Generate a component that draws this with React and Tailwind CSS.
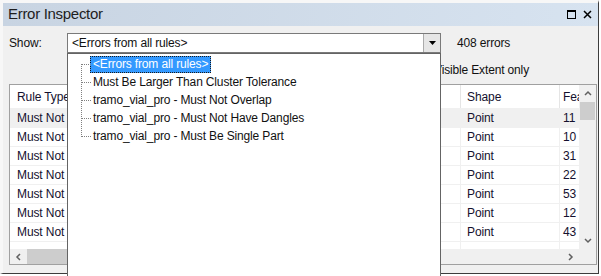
import React from 'react';

const rows = ['11', '10', '31', '22', '53', '12', '43'];

const ruleItems = [
    'Must Be Larger Than Cluster Tolerance',
    'tramo_vial_pro - Must Not Overlap',
    'tramo_vial_pro - Must Not Have Dangles',
    'tramo_vial_pro - Must Be Single Part',
];

const Chevron = ({ dir }) => {
    const paths = {
        up: 'M1 5 L4 2 L7 5',
        down: 'M1 2 L4 5 L7 2',
        left: 'M5 1 L2 4 L5 7',
        right: 'M2 1 L5 4 L2 7',
    };
    return (
        <svg width="8" height="8" viewBox="0 0 8 8">
            <path d={paths[dir]} fill="none" stroke="#606060" strokeWidth="1.5" />
        </svg>
    );
};

const RuleList = () => (
    <div className="absolute left-[67px] top-[53px] w-[374px] h-[230px] bg-white border border-[#646464] z-10">
        {/* tree connector lines */}
        <svg className="absolute left-0 top-0" width="30" height="100">
            <g stroke="#808080" strokeWidth="1" strokeDasharray="1 1" shapeRendering="crispEdges">
                <line x1="13.5" y1="10" x2="13.5" y2="83" />
                <line x1="13.5" y1="10.5" x2="23" y2="10.5" />
                <line x1="13.5" y1="28.5" x2="23" y2="28.5" />
                <line x1="13.5" y1="46.5" x2="23" y2="46.5" />
                <line x1="13.5" y1="64.5" x2="23" y2="64.5" />
                <line x1="13.5" y1="82.5" x2="23" y2="82.5" />
            </g>
        </svg>
        <div className="flex flex-col pt-[1px] pl-[22px] text-[12px] tracking-[-0.15px] text-[#111]">
            <div className="h-[18px] flex items-center">
                <span className="h-[17px] flex items-center px-[3px] bg-[#3399ff] text-white outline outline-1 outline-dotted outline-[#1a1a1a] -outline-offset-1">
                    &lt;Errors from all rules&gt;
                </span>
            </div>
            {ruleItems.map((t) => (
                <div key={t} className="h-[18px] flex items-center pl-[3px]">{t}</div>
            ))}
        </div>
    </div>
);

const ErrorTable = () => (
    <div className="ml-[6px] mt-[6px] w-[588px] h-[181px] border border-[#a0a0a0] bg-white flex flex-col">
        <div className="flex h-[164px]">
            <div className="flex-1 overflow-hidden flex flex-col text-[12px] tracking-[-0.1px] text-[#14102e]">
                <div className="h-[24px] flex shrink-0 border-b border-[#f0f0f0]">
                    <div className="w-[451px] shrink-0 flex items-center pl-[7px] border-r border-[#e5e5e5]">Rule Type</div>
                    <div className="w-[99px] shrink-0 flex items-center pl-[6px] border-r border-[#e5e5e5]">Shape</div>
                    <div className="w-[60px] shrink-0 flex items-center pl-[3px]">Feature</div>
                </div>
                {rows.map((n, i) => (
                    <div key={i} className={`h-[19px] flex shrink-0 border-b border-[#f0f0f0] ${i === 0 ? 'bg-[#f0f0f0]' : ''}`}>
                        <div className="w-[451px] shrink-0 flex items-center pl-[7px] border-r border-[#f0f0f0]">Must Not Have Dangles</div>
                        <div className="w-[99px] shrink-0 flex items-center pl-[6px] border-r border-[#f0f0f0]">Point</div>
                        <div className="w-[60px] shrink-0 flex items-center pl-[3px]">{n}</div>
                    </div>
                ))}
                <div className="flex flex-1">
                    <div className="w-[451px] shrink-0 border-r border-[#f0f0f0]" />
                    <div className="w-[99px] shrink-0 border-r border-[#f0f0f0]" />
                </div>
            </div>
            <div className="w-[17px] shrink-0 bg-[#f0f0f0] flex flex-col items-center">
                <div className="h-[17px] flex items-center justify-center"><Chevron dir="up" /></div>
                <div className="w-[15px] h-[18px] bg-[#cdcdcd]" />
                <div className="flex-1" />
                <div className="h-[17px] flex items-center justify-center"><Chevron dir="down" /></div>
            </div>
        </div>
        <div className="flex h-[15px] bg-[#f0f0f0]">
            <div className="w-[17px] flex items-center justify-center"><Chevron dir="left" /></div>
            <div className="w-[300px] h-[15px] bg-[#cdcdcd]" />
            <div className="flex-1" />
            <div className="w-[17px] flex items-center justify-center"><Chevron dir="right" /></div>
            <div className="w-[17px]" />
        </div>
    </div>
);

const App = () => {
    return (
        <div className="relative w-[601px] h-[276px] bg-white overflow-hidden font-['Liberation_Sans',Arial,sans-serif]">
            <div className="w-[599px] h-[274px] bg-[#f0f0f0] border-l-[3px] border-t-[3px] border-[#f7f7f7] border-r border-r-[#3c3c3c] border-b border-b-[#3c3c3c] flex flex-col">
                <div className="h-[23px] flex items-center bg-gradient-to-r from-[#c8d4e2] to-[#d7e3f0] pl-[5px] pr-[6px]">
                    <span className="text-[15px] tracking-[-0.3px] text-[#1e1e1e]">Error Inspector</span>
                    <div className="ml-auto flex items-center gap-[7px]">
                        <svg width="9" height="9" viewBox="0 0 9 9">
                            <rect x="0.5" y="0.5" width="8" height="8" fill="none" stroke="#000" />
                            <line x1="0" y1="1.5" x2="9" y2="1.5" stroke="#000" />
                        </svg>
                        <svg width="9" height="9" viewBox="0 0 9 9">
                            <path d="M1 1 L8 8 M8 1 L1 8" stroke="#000" strokeWidth="1.5" />
                        </svg>
                    </div>
                </div>

                <div className="flex items-center mt-[7px] h-[20px] text-[12px] tracking-[-0.15px] text-[#111]">
                    <span className="ml-[6px] w-[58px]">Show:</span>
                    <div className="w-[374px] h-[20px] bg-white border border-[#7a7a7a] flex items-center">
                        <span className="pl-[4px] flex-1">&lt;Errors from all rules&gt;</span>
                        <div className="w-[17px] h-[18px] bg-[#e6e6e6] border-l border-[#ababab] flex items-center justify-center">
                            <svg width="7" height="4" viewBox="0 0 7 4"><path d="M0 0 H7 L3.5 4 Z" fill="#000" /></svg>
                        </div>
                    </div>
                    <span className="ml-[16px]">408 errors</span>
                </div>

                <div className="flex items-center h-[17px] mt-[8px] text-[12px] tracking-[-0.15px] text-[#111]">
                    <span className="ml-[408px] w-[13px] h-[13px] border border-[#333] bg-white" />
                    <span className="ml-[10px]">Visible Extent only</span>
                </div>

                <ErrorTable />
            </div>
            <RuleList />
        </div>
    );
};

export default App;
